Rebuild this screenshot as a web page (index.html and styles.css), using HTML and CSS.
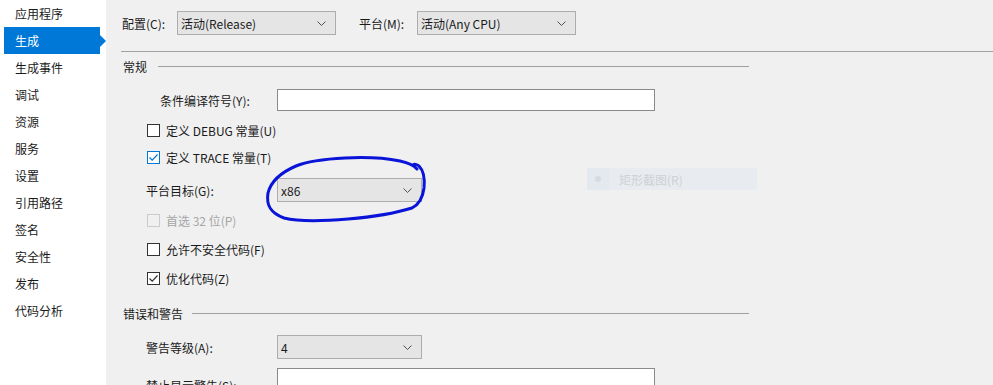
FILE: index.html
```html
<!DOCTYPE html>
<html>
<head>
    <title>生成</title>
    <link rel="stylesheet" href="styles.css">
</head>
<body>
    <div class="page">
        <nav class="sidebar">
            <div class="navItem">应用程序</div>
            <div class="navItem selected">生成</div>
            <div class="navItem">生成事件</div>
            <div class="navItem">调试</div>
            <div class="navItem">资源</div>
            <div class="navItem">服务</div>
            <div class="navItem">设置</div>
            <div class="navItem">引用路径</div>
            <div class="navItem">签名</div>
            <div class="navItem">安全性</div>
            <div class="navItem">发布</div>
            <div class="navItem">代码分析</div>
        </nav>

        <main class="panel">
            <div class="toolbar">
                <span class="toolLabel">配置(C):</span>
                <div class="combo wide">
                    <span>活动(Release)</span>
                    <svg class="chev" width="9" height="5" viewBox="0 0 9 5"><path d="M0.5 0.5 L4.5 4.5 L8.5 0.5" fill="none" stroke="#505050" stroke-width="1"/></svg>
                </div>
                <span class="toolLabel second">平台(M):</span>
                <div class="combo wide">
                    <span>活动(Any CPU)</span>
                    <svg class="chev" width="9" height="5" viewBox="0 0 9 5"><path d="M0.5 0.5 L4.5 4.5 L8.5 0.5" fill="none" stroke="#505050" stroke-width="1"/></svg>
                </div>
            </div>
            <div class="rule"></div>

            <!-- general -->
            <div class="groupTitle first"><span>常规</span><i></i></div>
            <div class="row h40">
                <span class="fieldLabel indent">条件编译符号(Y):</span>
                <div class="textBox"></div>
            </div>
            <div class="row h20 check">
                <span class="box"></span><span>定义 DEBUG 常量(U)</span>
            </div>
            <div class="row h34 check">
                <span class="box on"><svg width="11" height="11" viewBox="0 0 11 11"><path d="M1.5 5.5 L4.2 8.2 L9.5 2.5" fill="none" stroke="#0078d7" stroke-width="1.2"/></svg></span><span>定义 TRACE 常量(T)</span>
            </div>
            <div class="row h32">
                <span class="fieldLabel">平台目标(G):</span>
                <div class="combo narrow">
                    <span>x86</span>
                    <svg class="chev" width="9" height="5" viewBox="0 0 9 5"><path d="M0.5 0.5 L4.5 4.5 L8.5 0.5" fill="none" stroke="#505050" stroke-width="1"/></svg>
                </div>
            </div>
            <div class="row h28 check disabled">
                <span class="box"></span><span>首选 32 位(P)</span>
            </div>
            <div class="row h30 check">
                <span class="box"></span><span>允许不安全代码(F)</span>
            </div>
            <div class="row h28 check">
                <span class="box checked"><svg width="11" height="11" viewBox="0 0 11 11"><path d="M1.5 5.5 L4.2 8.2 L9.5 2.5" fill="none" stroke="#333" stroke-width="1.2"/></svg></span><span>优化代码(Z)</span>
            </div>

            <!-- errors and warnings -->
            <div class="groupTitle"><span>错误和警告</span><i></i></div>
            <div class="row h26">
                <span class="fieldLabel">警告等级(A):</span>
                <div class="combo narrow">
                    <span>4</span>
                    <svg class="chev" width="9" height="5" viewBox="0 0 9 5"><path d="M0.5 0.5 L4.5 4.5 L8.5 0.5" fill="none" stroke="#505050" stroke-width="1"/></svg>
                </div>
            </div>
            <div class="row h38 top">
                <span class="fieldLabel low">禁止显示警告(S):</span>
                <div class="textBox"></div>
            </div>
        </main>

        <!-- leftover snip menu item -->
        <div class="ghostMenu">
            <span class="ghostIcon"><i></i></span>
            <span class="ghostText">矩形截图(R)</span>
        </div>

        <!-- hand drawn marker ring -->
        <svg class="marker" width="993" height="385" viewBox="0 0 993 385">
            <path d="M417 169 C414 165 409 163 400 161 C385 158 365 157 345 158 C325 159 308 161 296 166 C282 172 271 181 268 193 C266 205 270 213 284 218 C300 222 325 221 348 219 C372 217 396 213 412 208 C420 204 423 196 424 188 C425 178 423 170 419 166 C417 164 414 164 413 165"
                  fill="none" stroke="#0a14d8" stroke-width="3" stroke-linecap="round" stroke-linejoin="round"/>
        </svg>
    </div>
</body>
</html>
```

FILE: styles.css
```css
body {
    margin: 0px;
    padding: 0px;
    background-color: #f0f0f0;
    font: 12px "Noto Sans CJK SC", "Liberation Sans", sans-serif;
    color: #1a1a1a;
    overflow: hidden;
}

.page {
    position: relative;
    display: flex;
    width: 993px;
    height: 385px;
    overflow: hidden;
}

.sidebar {
    width: 106px;
    flex: none;
    background-color: white;
}

.navItem {
    position: relative;
    height: 27px;
    line-height: 27px;
    margin-left: 4px;
    width: 96px;
    padding-left: 11px;
    box-sizing: border-box;
}

.navItem.selected {
    background-color: #0078d7;
    color: white;
}

    .navItem.selected::after {
        content: "";
        position: absolute;
        right: -6px;
        top: 8px;
        border-left: 6px solid #0078d7;
        border-top: 6px solid transparent;
        border-bottom: 6px solid transparent;
    }

.panel {
    flex: 1;
    background-color: #f0f0f0;
}

.toolbar {
    display: flex;
    align-items: center;
    height: 24px;
    margin-top: 11px;
    padding-left: 16px;
}

.toolLabel {
    width: 55px;
}

.toolLabel.second {
    margin-left: 23px;
    width: 58px;
}

.combo {
    display: flex;
    align-items: center;
    justify-content: space-between;
    height: 24px;
    box-sizing: border-box;
    border: 1px solid #adadad;
    background-color: #e5e5e5;
    padding: 0px 9px 0px 3px;
}

.combo.wide {
    width: 159px;
}

.combo.narrow {
    width: 145px;
}

.chev {
    display: block;
}

.rule {
    height: 1px;
    margin-top: 16px;
    margin-left: 15px;
    background-color: #a0a0a0;
}

.groupTitle {
    display: flex;
    align-items: center;
    width: 628px;
    height: 42px;
    margin-left: 15px;
    padding-left: 2px;
    box-sizing: border-box;
}

.groupTitle.first {
    height: 28px;
}

    .groupTitle i {
        flex: 1;
        height: 1px;
        margin-left: 9px;
        background-color: #a0a0a0;
    }

.groupTitle.first i {
    margin-left: 11px;
}

.row {
    display: flex;
    align-items: center;
    padding-left: 40px;
}

.row.top {
    align-items: flex-start;
}

.h20 { height: 20px; }
.h26 { height: 26px; }
.h28 { height: 28px; }
.h30 { height: 30px; }
.h32 { height: 32px; }
.h34 { height: 34px; }
.h38 { height: 38px; }
.h40 { height: 40px; }

.fieldLabel {
    width: 131px;
    flex: none;
}

.fieldLabel.indent {
    padding-left: 14px;
    width: 117px;
}

.fieldLabel.low {
    margin-top: 17px;
}

.textBox {
    width: 378px;
    height: 22px;
    box-sizing: border-box;
    border: 1px solid #8a8a8a;
    background-color: white;
}

.row.top .textBox {
    margin-top: 8px;
}

.check {
    padding-left: 41px;
}

.box {
    width: 13px;
    height: 13px;
    box-sizing: border-box;
    border: 1px solid #333;
    background-color: white;
    margin-right: 6px;
    display: flex;
    align-items: center;
    justify-content: center;
}

.box.on {
    border-color: #0078d7;
}

.disabled {
    color: #a6a6a6;
}

    .disabled .box {
        border-color: #cccccc;
        background-color: #f0f0f0;
    }

.ghostMenu {
    position: absolute;
    left: 587px;
    top: 168px;
    width: 170px;
    height: 22px;
    display: flex;
    align-items: center;
    background-color: #e8ebef;
}

.ghostIcon {
    width: 22px;
    height: 22px;
    display: flex;
    align-items: center;
    justify-content: center;
    background-color: #e4e9ef;
}

    .ghostIcon i {
        width: 6px;
        height: 6px;
        border-radius: 50%;
        background-color: #d6dbe1;
    }

.ghostText {
    margin-left: 10px;
    color: #cfd1d4;
}

.marker {
    position: absolute;
    left: 0px;
    top: 0px;
    pointer-events: none;
}
```
